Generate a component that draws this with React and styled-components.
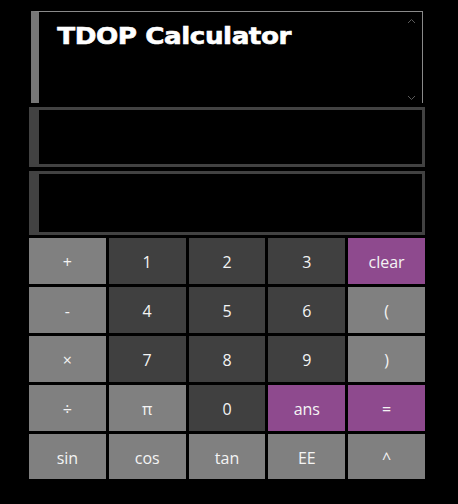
import styled, { createGlobalStyle } from 'styled-components';

const GlobalStyle = createGlobalStyle`
    body {
        margin: 0;
        background: #000000;
        font-family: "Open Sans", "DejaVu Sans", sans-serif;
    }
`;

const keys = [
    ['+', 'light'], ['1', 'dark'], ['2', 'dark'], ['3', 'dark'], ['clear', 'accent'],
    ['-', 'light'], ['4', 'dark'], ['5', 'dark'], ['6', 'dark'], ['(', 'light'],
    ['×', 'light'], ['7', 'dark'], ['8', 'dark'], ['9', 'dark'], [')', 'light'],
    ['÷', 'light'], ['π', 'light'], ['0', 'dark'], ['ans', 'accent'], ['=', 'accent'],
    ['sin', 'light'], ['cos', 'light'], ['tan', 'light'], ['EE', 'light'], ['^', 'light'],
];

const colors = {
    light: '#808080',
    dark: '#404040',
    accent: '#8e4a8e',
};

export default function App() {
    return (
        <>
            <GlobalStyle />
            <Calculator>
                <TitlePanel>
                    <Title>TDOP Calculator</Title>
                    <ScrollArrow $top>
                        <svg width="9" height="6" viewBox="0 0 9 6">
                            <path d="M1 5 L4.5 1.5 L8 5" stroke="#5a5a5a" fill="none" strokeWidth="1" />
                        </svg>
                    </ScrollArrow>
                    <ScrollArrow>
                        <svg width="9" height="6" viewBox="0 0 9 6">
                            <path d="M1 1 L4.5 4.5 L8 1" stroke="#5a5a5a" fill="none" strokeWidth="1" />
                        </svg>
                    </ScrollArrow>
                </TitlePanel>
                <Display $height={60} $gap={4} />
                <Display $height={64} $gap={3} />
                <Keypad>
                    {keys.map(([label, kind]) => (
                        <Key key={label} $kind={kind}>{label}</Key>
                    ))}
                </Keypad>
            </Calculator>
        </>
    );
}

const Calculator = styled.div`
    width: 396px;
    margin-left: 29px;
    padding-top: 11px;
    display: flex;
    flex-direction: column;
`;

const TitlePanel = styled.div`
    position: relative;
    height: 91px;
    margin: 0 2px 4px 2px;
    border-left: 8px solid #777777;
    border-top: 1px solid #8a8a8a;
    border-right: 1px solid #8a8a8a;
    background: #000000;
`;

const Title = styled.h1`
    width: max-content;
    margin: 0;
    padding: 9px 0 0 16px;
    font-family: "DejaVu Sans", sans-serif;
    font-weight: 800;
    font-size: 23px;
    line-height: 30px;
    letter-spacing: -0.4px;
    color: #ffffff;
    -webkit-text-stroke: 0.6px #ffffff;
    transform: scaleX(1.14);
    transform-origin: left center;
`;

const ScrollArrow = styled.div`
    position: absolute;
    right: 6px;
    ${(p) => (p.$top ? 'top: 6px;' : 'bottom: 2px;')}
    display: flex;
`;

const Display = styled.div`
    height: ${(p) => p.$height}px;
    box-sizing: border-box;
    margin-bottom: ${(p) => p.$gap}px;
    border: 3px solid #424242;
    border-left-width: 10px;
    background: #000000;
`;

const Keypad = styled.div`
    display: grid;
    grid-template-columns: repeat(5, 1fr);
    grid-template-rows: 46px 46px 46px 46px 45px;
    gap: 3px;
`;

const Key = styled.div`
    display: flex;
    align-items: center;
    justify-content: center;
    padding-top: 2px;
    background: ${(p) => colors[p.$kind]};
    color: #f4f4f4;
    font-size: 16px;
    cursor: pointer;
    user-select: none;
`;
